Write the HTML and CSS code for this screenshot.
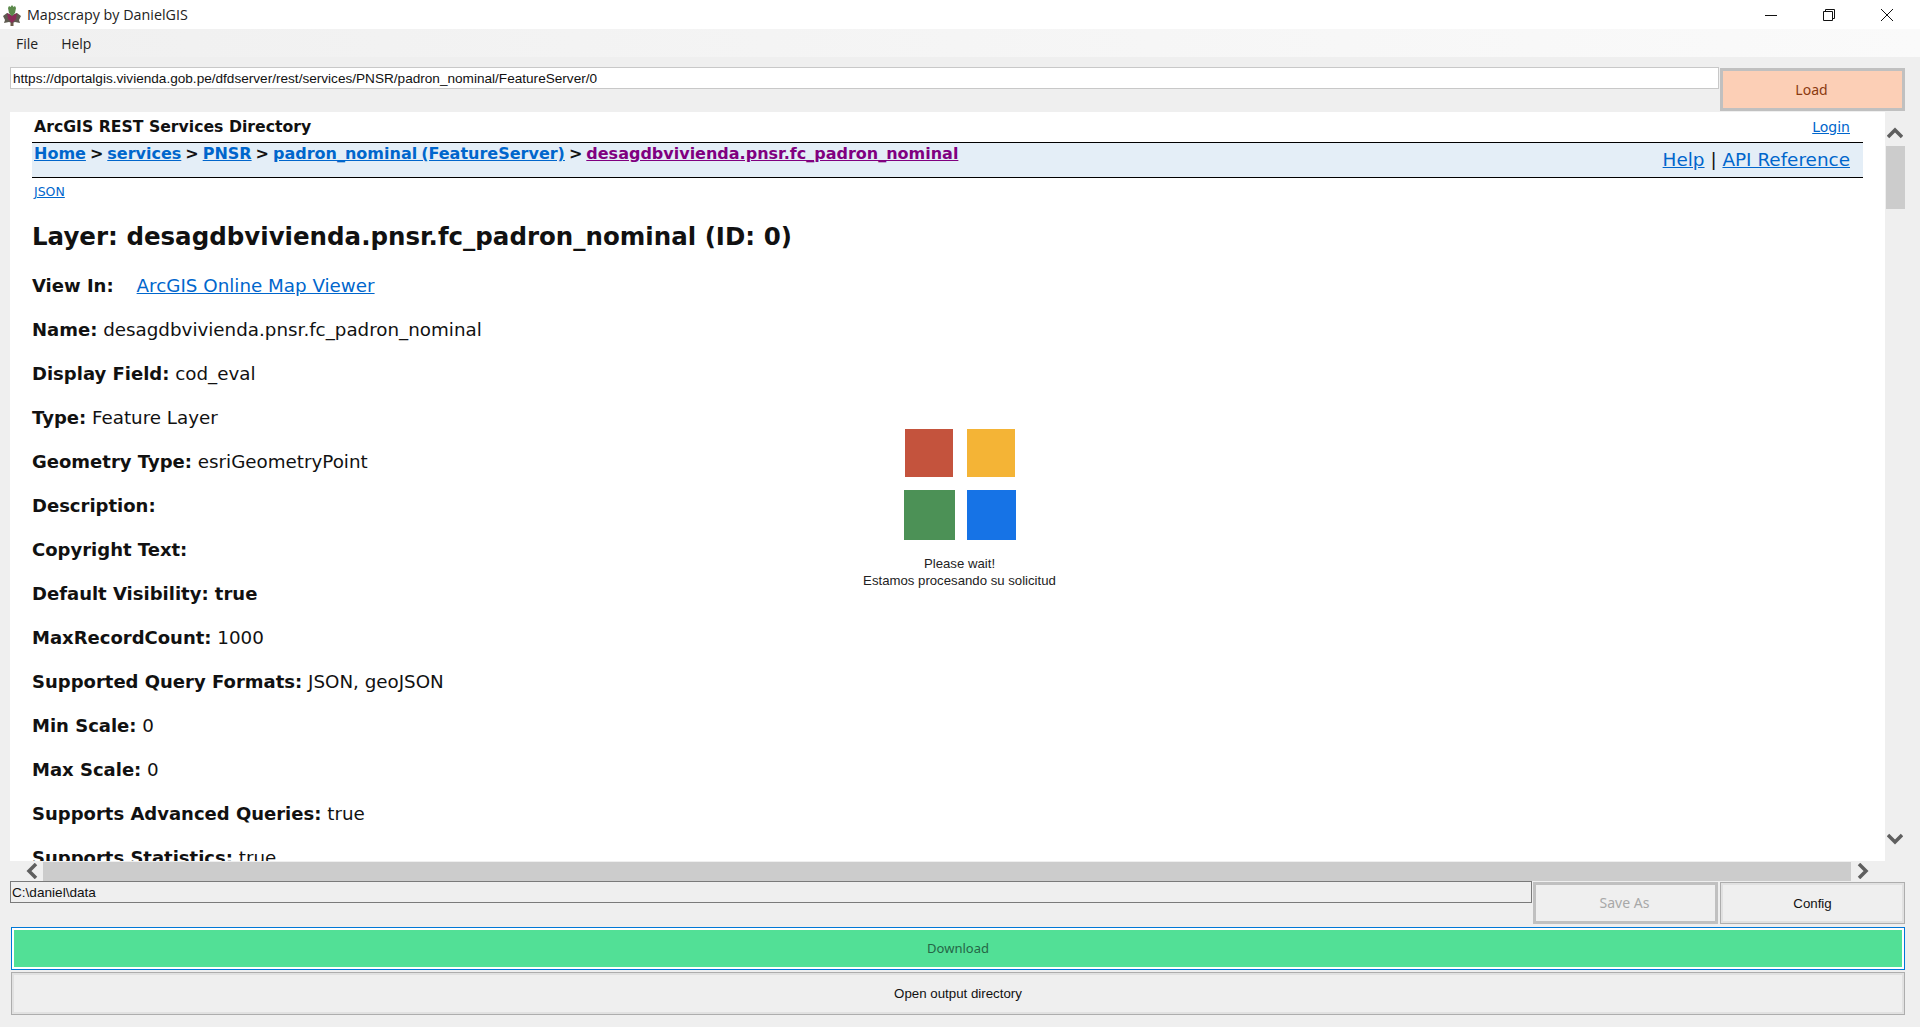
FILE: index.html
```html
<!DOCTYPE html>
<html lang="en">
<head>
  <meta charset="UTF-8">
  <meta name="viewport" content="width=device-width, initial-scale=1.0">
  <title>Mapscrapy by DanielGIS</title>
  <link rel="stylesheet" href="styles.css">
</head>
<body>
  <div class="titlebar">
    <svg class="app-icon" width="20" height="24" viewBox="0 0 20 24">
      <rect x="8.500" y="19" width="3" height="4" fill="#6b5a48"/>
      <path d="M1 13l4-3 5 2 5-2 4 3-2 4 1 3-5-1-3 1-3-1-5 1 1-3z" fill="#5e5b50"/>
      <path d="M5 10l5 3 5-3-1 6-4 4-4-4z" fill="#8a2c58"/>
      <path d="M6 5l1-2 1.500 1L10 2l1.500 2L13 3l1 2-1 5-3 3-3-3z" fill="#5c8a4c"/>
    </svg>
    <span class="app-name">Mapscrapy by DanielGIS</span>
    <div class="win-buttons">
      <svg width="14" height="14" viewBox="0 0 14 14"><path d="M1 7.500h12" stroke="#111" fill="none"/></svg>
      <svg width="14" height="14" viewBox="0 0 14 14"><path d="M1.500 3.500h9v9h-9zM3.500 3.500v-2h9v9h-2" stroke="#111" fill="none"/></svg>
      <svg width="14" height="14" viewBox="0 0 14 14"><path d="M1 1l12 12M13 1L1 13" stroke="#111" fill="none"/></svg>
    </div>
  </div>

  <div class="menubar">
    <span>File</span>
    <span>Help</span>
  </div>

  <div class="url-row">
    <input class="url-input" type="text" value="https://dportalgis.vivienda.gob.pe/dfdserver/rest/services/PNSR/padron_nominal/FeatureServer/0">
    <button class="btn btn-load" type="button">Load</button>
  </div>

  <div class="browser">
    <div class="viewport">
      <div class="page-head">
        <b>ArcGIS REST Services Directory</b>
        <a class="login" href="#">Login</a>
      </div>
      <div class="crumbs">
        <div class="crumb-links">
          <a href="#">Home</a> &gt; <a href="#">services</a> &gt; <a href="#">PNSR</a> &gt;
          <a href="#">padron_nominal (FeatureServer)</a> &gt;
          <a class="visited" href="#">desagdbvivienda.pnsr.fc_padron_nominal</a>
        </div>
        <div class="crumb-help"><a href="#">Help</a> | <a href="#">API Reference</a></div>
      </div>
      <div class="formats"><a href="#">JSON</a></div>
      <h2>Layer: desagdbvivienda.pnsr.fc_padron_nominal (ID: 0)</h2>
      <div class="field view-in"><b>View In:</b><a href="#">ArcGIS Online Map Viewer</a></div>
      <div class="field"><b>Name:</b> desagdbvivienda.pnsr.fc_padron_nominal</div>
      <div class="field"><b>Display Field:</b> cod_eval</div>
      <div class="field"><b>Type:</b> Feature Layer</div>
      <div class="field"><b>Geometry Type:</b> esriGeometryPoint</div>
      <div class="field"><b>Description:</b></div>
      <div class="field"><b>Copyright Text:</b></div>
      <div class="field"><b>Default Visibility: true</b></div>
      <div class="field"><b>MaxRecordCount:</b> 1000</div>
      <div class="field"><b>Supported Query Formats:</b> JSON, geoJSON</div>
      <div class="field"><b>Min Scale:</b> 0</div>
      <div class="field"><b>Max Scale:</b> 0</div>
      <div class="field"><b>Supports Advanced Queries:</b> true</div>
      <div class="field"><b>Supports Statistics:</b> true</div>
    </div>
    <div class="vscroll">
      <svg class="arrow" width="16" height="12" viewBox="0 0 16 12"><path d="M1 10l7-7 7 7" stroke="#5f5f5f" stroke-width="3.500" fill="none"/></svg>
      <div class="vthumb"></div>
      <svg class="arrow arrow-down" width="16" height="12" viewBox="0 0 16 12"><path d="M1 2l7 7 7-7" stroke="#5f5f5f" stroke-width="3.500" fill="none"/></svg>
    </div>

    <!-- loader sits on top of the page -->
    <div class="loader">
      <div class="squares">
        <div class="sq sq-red"></div>
        <div class="sq sq-yellow"></div>
        <div class="sq sq-green"></div>
        <div class="sq sq-blue"></div>
      </div>
      <div class="loader-text">Please wait!<br>Estamos procesando su solicitud</div>
    </div>
  </div>

  <div class="hscroll">
    <svg width="14" height="16" viewBox="0 0 14 16"><path d="M11 1L4 8l7 7" stroke="#5f5f5f" stroke-width="3.500" fill="none"/></svg>
    <div class="hthumb"></div>
    <svg width="14" height="16" viewBox="0 0 14 16"><path d="M3 1l7 7-7 7" stroke="#5f5f5f" stroke-width="3.500" fill="none"/></svg>
  </div>

  <div class="path-row">
    <input class="path-input" type="text" value="C:\daniel\data">
    <button class="btn btn-disabled" type="button">Save As</button>
    <button class="btn btn-plain" type="button">Config</button>
  </div>

  <button class="btn btn-wide btn-download" type="button">Download</button>
  <button class="btn btn-wide btn-plain" type="button">Open output directory</button>
</body>
</html>
```

FILE: styles.css
```css
body {
  margin: 0;
  padding: 0;
  height: 1027px;
  overflow: hidden;
  background-color: #efefef;
  font-family: "Liberation Sans", Arial, sans-serif;
}

/* window chrome */
.titlebar {
  height: 29px;
  background-color: #fff;
  display: flex;
  align-items: center;
  padding-left: 2px;
}
.app-icon {
  margin-right: 5px;
}
.app-name {
  font-family: "Open Sans", sans-serif;
  font-size: 14.300px;
  color: #222;
}
.win-buttons {
  margin-left: auto;
  display: flex;
  gap: 44px;
  padding-right: 26px;
}
.menubar {
  height: 28px;
  background: linear-gradient(to right, #f0f0f0, #fafafa);
  display: flex;
  align-items: center;
  gap: 23px;
  padding-left: 16px;
  font-family: "Open Sans", sans-serif;
  font-size: 14px;
  color: #222;
}

/* url row */
.url-row {
  height: 55px;
  display: flex;
  align-items: flex-start;
  padding: 10px 15px 0 10px;
  box-sizing: border-box;
}
.url-input {
  flex: 1;
  height: 22px;
  box-sizing: border-box;
  border: 1px solid #c8c8c8;
  padding: 1px 2px 0;
  font-family: "Liberation Sans", Arial, sans-serif;
  font-size: 13.600px;
  color: #111;
  background-color: #fff;
}

/* buttons */
.btn {
  display: block;
  box-sizing: border-box;
  width: 185px;
  height: 43px;
  border: 1px solid #adadad;
  box-shadow: inset 0 0 0 2px #e1e1e1;
  background-color: #efefef;
  font-family: "Noto Sans", sans-serif;
  font-size: 14px;
  color: #111;
  padding: 0 2px 1px 0;
}
.btn-plain {
  font-family: "Liberation Sans", Arial, sans-serif;
  font-size: 13.300px;
  padding: 1px 0 0;
}
.btn-load {
  margin: 1px 0 0 1px;
  border: 3px solid #c0c0c0;
  box-shadow: none;
  background-color: #fccfb6;
  color: #8a3a10;
}
.btn-disabled {
  border: 3px solid #c0c0c0;
  box-shadow: none;
  color: #a8a8a8;
}
.btn-wide {
  width: 1894px;
  margin-left: 11px;
  margin-bottom: 2px;
}
.btn-wide.btn-plain {
  padding: 0;
}
.btn-download {
  border-color: #0078d7;
  box-shadow: inset 0 0 0 2px #fff;
  background-color: #52e096;
  color: #256646;
  font-size: 13px;
  padding: 0 0 1px;
}

/* embedded browser */
.browser {
  position: relative;
  height: 749px;
  display: flex;
  margin: 0 15px 0 10px;
}
.viewport {
  flex: 1;
  overflow: hidden;
  background-color: #fff;
  padding: 0 22px;
  font-family: "DejaVu Sans", Verdana, sans-serif;
  font-size: 18.300px;
  color: #111;
}
.viewport b {
  font-size: 18px;
}
.viewport a {
  color: #0066cc;
}
.viewport a.visited {
  color: #800080;
}
.page-head {
  height: 28px;
  padding: 0 13px 2px 2px;
  display: flex;
  align-items: center;
  justify-content: space-between;
  box-sizing: content-box;
}
.page-head b {
  font-size: 15.700px;
}
.login {
  font-size: 14px;
  margin-top: 2px;
}
.crumbs {
  height: 36px;
  box-sizing: border-box;
  border-top: 1px solid #000;
  border-bottom: 1px solid #000;
  background-color: #e4eef7;
  display: flex;
  justify-content: space-between;
  padding: 0 13px 0 2px;
  font-size: 16px;
}
.crumb-links {
  font-weight: bold;
  line-height: 22px;
  word-spacing: -1.600px;
}
.crumb-help {
  font-size: 18.400px;
  line-height: 34px;
}
.formats {
  font-size: 12.500px;
  margin: 6px 0 0 2px;
  height: 22px;
}
h2 {
  margin: 0;
  font-size: 24.500px;
  line-height: 32px;
  padding-top: 15px;
  margin-bottom: 19px;
}
.field {
  height: 44px;
  line-height: 28px;
  white-space: nowrap;
}
.view-in a {
  margin-left: 23px;
}
.vscroll {
  width: 20px;
  display: flex;
  flex-direction: column;
  align-items: center;
  padding-top: 15px;
  box-sizing: border-box;
}
.vthumb {
  width: 19px;
  height: 63px;
  margin: 7px 0 0 1px;
  background-color: #cccccc;
}
.arrow-down {
  margin-top: auto;
  margin-bottom: 16px;
}
.loader {
  position: absolute;
  left: 835px;
  top: 317px;
  width: 229px;
  text-align: center;
}
.squares {
  display: grid;
  grid-template-columns: 51px 49px;
  grid-template-rows: 48px 50px;
  column-gap: 12px;
  row-gap: 13px;
  justify-content: center;
  justify-items: center;
}
.sq-red {
  width: 48px;
  background-color: #c4533d;
}
.sq-yellow {
  width: 48px;
  background-color: #f4b436;
}
.sq-green {
  width: 51px;
  background-color: #4c9156;
}
.sq-blue {
  width: 49px;
  background-color: #1673e6;
}
.loader-text {
  margin-top: 15px;
  font-size: 13.200px;
  line-height: 17px;
  color: #222;
}

/* horizontal bar */
.hscroll {
  height: 20px;
  display: flex;
  align-items: center;
  margin: 0 15px 0 10px;
  padding-left: 15px;
}
.hthumb {
  width: 1808px;
  height: 19px;
  margin: 0 5px 0 4px;
  background-color: #cccccc;
}

/* path row */
.path-row {
  height: 46px;
  display: flex;
  align-items: flex-start;
  margin: 0 15px 0 10px;
}
.path-input {
  width: 1522px;
  height: 22px;
  box-sizing: border-box;
  border: 1px solid #7a7a7a;
  padding: 1px 1px 0;
  background-color: #efefef;
  font-family: "Liberation Sans", Arial, sans-serif;
  font-size: 13.600px;
  color: #111;
}
.path-row .btn {
  margin-top: 1px;
  height: 42px;
}
.path-row .btn-disabled {
  margin-left: 1px;
  margin-right: 2px;
}
```
